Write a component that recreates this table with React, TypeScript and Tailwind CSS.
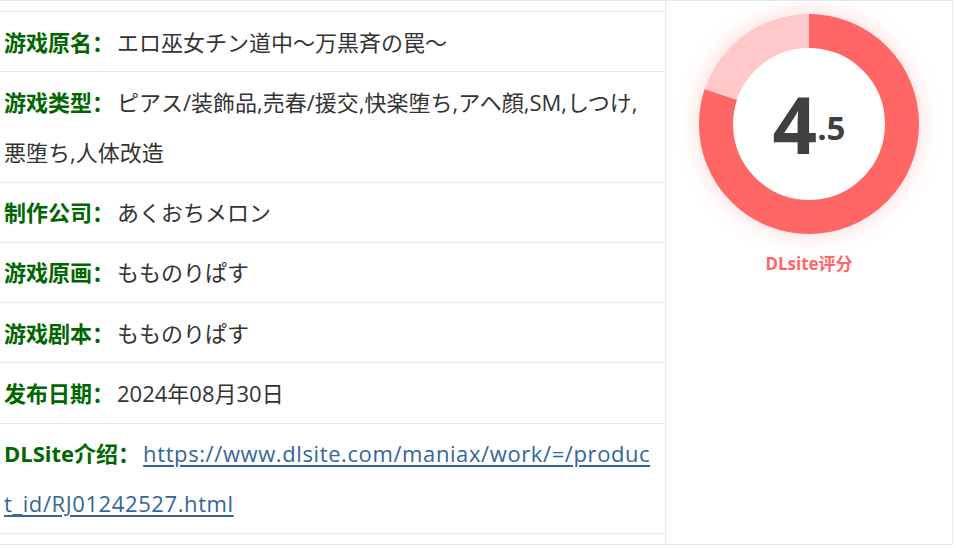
import React from 'react';

const rows: { label: string; value: string; href?: boolean }[] = [
  { label: '游戏原名：', value: 'エロ巫女チン道中～万黒斉の罠～' },
  { label: '游戏类型：', value: 'ピアス/装飾品,売春/援交,快楽堕ち,アヘ顔,SM,しつけ,悪堕ち,人体改造' },
  { label: '制作公司：', value: 'あくおちメロン' },
  { label: '游戏原画：', value: 'もものりぱす' },
  { label: '游戏剧本：', value: 'もものりぱす' },
  { label: '发布日期：', value: '2024年08月30日' },
  { label: 'DLSite介绍：', value: 'https://www.dlsite.com/maniax/work/=/product_id/RJ01242527.html', href: true },
];

function ScoreRing({ score }: { score: number }) {
  const r = 93;
  const c = 2 * Math.PI * r;
  const filled = c * 0.8;
  return (
    <div className="relative w-[220px] h-[220px] rounded-full shadow-[0_0_22px_rgba(255,102,102,0.28)]">
      <svg width="220" height="220" viewBox="0 0 220 220" className="absolute inset-0">
        <circle cx="110" cy="110" r={r} fill="none" stroke="#ffc9c9" strokeWidth="34" />
        <circle
          cx="110"
          cy="110"
          r={r}
          fill="none"
          stroke="#ff6666"
          strokeWidth="34"
          strokeDasharray={`${filled} ${c}`}
          transform="rotate(-90 110 110)"
        />
      </svg>
      <div className="absolute inset-0 flex items-center justify-center text-[#404040] font-bold font-['Open_Sans',sans-serif]">
        <span className="text-[78px] leading-none">{Math.floor(score)}</span>
        <span className="text-[33px] leading-none mt-[6px]">.{Math.round((score % 1) * 10)}</span>
      </div>
    </div>
  );
}

export default function App() {
  return (
    <div className="w-[956px] h-[548px] bg-white font-['Open_Sans','Noto_Sans_CJK_SC',sans-serif]">
      <div className="flex w-[953px] h-[545px] border-t border-r border-b border-[#e3eaf2]">
        {/* info table */}
        <div className="w-[666px] border-r border-[#e3eaf2] py-[10px]">
          {rows.map((row, i) => (
            <div
              key={row.label}
              className={`pl-[4px] pr-[12px] py-[4.65px] border-t border-[#e3eaf2] text-[22px] leading-[50px] text-[#333] break-all ${
                i === rows.length - 1 ? 'border-b' : ''
              }`}
            >
              <span className="font-bold text-[#006600] mr-[3px]">{row.label}</span>
              {row.href ? (
                <a href="#" className="text-[#336699] underline underline-offset-[3px] tracking-[0.6px]">
                  {row.value}
                </a>
              ) : (
                <span>{row.value}</span>
              )}
            </div>
          ))}
        </div>

        {/* score */}
        <div className="flex-1 flex flex-col items-center pt-[13px]">
          <ScoreRing score={4.5} />
          <div className="mt-[17px] text-[17px] font-bold text-[#ff6666]">DLsite评分</div>
        </div>
      </div>
    </div>
  );
}
